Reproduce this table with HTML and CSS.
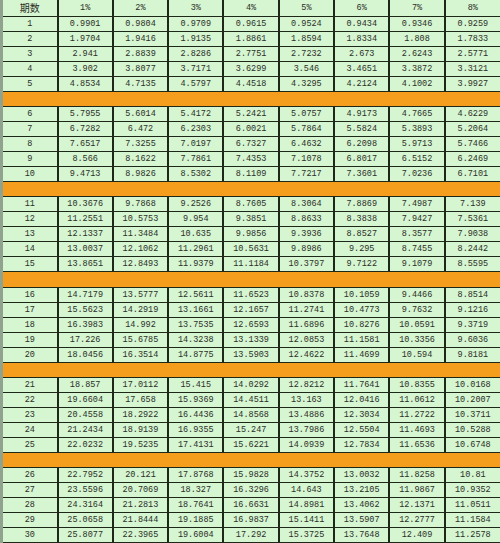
FILE: index.html
```html
<!DOCTYPE html>
<html lang="zh">
<head>
<meta charset="utf-8">
<title>年金现值系数表</title>
<link rel="stylesheet" href="styles.css">
</head>
<body>
<table class="pv">
<colgroup><col class="c-n"><col><col><col><col><col><col><col><col></colgroup>
<thead>
<tr class="hd"><th>期数</th><th>1%</th><th>2%</th><th>3%</th><th>4%</th><th>5%</th><th>6%</th><th>7%</th><th>8%</th></tr>
</thead>
<tbody>
<tr><td>1</td><td>0.9901</td><td>0.9804</td><td>0.9709</td><td>0.9615</td><td>0.9524</td><td>0.9434</td><td>0.9346</td><td>0.9259</td></tr>
<tr><td>2</td><td>1.9704</td><td>1.9416</td><td>1.9135</td><td>1.8861</td><td>1.8594</td><td>1.8334</td><td>1.808</td><td>1.7833</td></tr>
<tr><td>3</td><td>2.941</td><td>2.8839</td><td>2.8286</td><td>2.7751</td><td>2.7232</td><td>2.673</td><td>2.6243</td><td>2.5771</td></tr>
<tr><td>4</td><td>3.902</td><td>3.8077</td><td>3.7171</td><td>3.6299</td><td>3.546</td><td>3.4651</td><td>3.3872</td><td>3.3121</td></tr>
<tr><td>5</td><td>4.8534</td><td>4.7135</td><td>4.5797</td><td>4.4518</td><td>4.3295</td><td>4.2124</td><td>4.1002</td><td>3.9927</td></tr>
<tr class="sep"><td colspan="9"></td></tr>
<tr><td>6</td><td>5.7955</td><td>5.6014</td><td>5.4172</td><td>5.2421</td><td>5.0757</td><td>4.9173</td><td>4.7665</td><td>4.6229</td></tr>
<tr><td>7</td><td>6.7282</td><td>6.472</td><td>6.2303</td><td>6.0021</td><td>5.7864</td><td>5.5824</td><td>5.3893</td><td>5.2064</td></tr>
<tr><td>8</td><td>7.6517</td><td>7.3255</td><td>7.0197</td><td>6.7327</td><td>6.4632</td><td>6.2098</td><td>5.9713</td><td>5.7466</td></tr>
<tr><td>9</td><td>8.566</td><td>8.1622</td><td>7.7861</td><td>7.4353</td><td>7.1078</td><td>6.8017</td><td>6.5152</td><td>6.2469</td></tr>
<tr><td>10</td><td>9.4713</td><td>8.9826</td><td>8.5302</td><td>8.1109</td><td>7.7217</td><td>7.3601</td><td>7.0236</td><td>6.7101</td></tr>
<tr class="sep"><td colspan="9"></td></tr>
<tr><td>11</td><td>10.3676</td><td>9.7868</td><td>9.2526</td><td>8.7605</td><td>8.3064</td><td>7.8869</td><td>7.4987</td><td>7.139</td></tr>
<tr><td>12</td><td>11.2551</td><td>10.5753</td><td>9.954</td><td>9.3851</td><td>8.8633</td><td>8.3838</td><td>7.9427</td><td>7.5361</td></tr>
<tr><td>13</td><td>12.1337</td><td>11.3484</td><td>10.635</td><td>9.9856</td><td>9.3936</td><td>8.8527</td><td>8.3577</td><td>7.9038</td></tr>
<tr><td>14</td><td>13.0037</td><td>12.1062</td><td>11.2961</td><td>10.5631</td><td>9.8986</td><td>9.295</td><td>8.7455</td><td>8.2442</td></tr>
<tr><td>15</td><td>13.8651</td><td>12.8493</td><td>11.9379</td><td>11.1184</td><td>10.3797</td><td>9.7122</td><td>9.1079</td><td>8.5595</td></tr>
<tr class="sep"><td colspan="9"></td></tr>
<tr><td>16</td><td>14.7179</td><td>13.5777</td><td>12.5611</td><td>11.6523</td><td>10.8378</td><td>10.1059</td><td>9.4466</td><td>8.8514</td></tr>
<tr><td>17</td><td>15.5623</td><td>14.2919</td><td>13.1661</td><td>12.1657</td><td>11.2741</td><td>10.4773</td><td>9.7632</td><td>9.1216</td></tr>
<tr><td>18</td><td>16.3983</td><td>14.992</td><td>13.7535</td><td>12.6593</td><td>11.6896</td><td>10.8276</td><td>10.0591</td><td>9.3719</td></tr>
<tr><td>19</td><td>17.226</td><td>15.6785</td><td>14.3238</td><td>13.1339</td><td>12.0853</td><td>11.1581</td><td>10.3356</td><td>9.6036</td></tr>
<tr><td>20</td><td>18.0456</td><td>16.3514</td><td>14.8775</td><td>13.5903</td><td>12.4622</td><td>11.4699</td><td>10.594</td><td>9.8181</td></tr>
<tr class="sep"><td colspan="9"></td></tr>
<tr><td>21</td><td>18.857</td><td>17.0112</td><td>15.415</td><td>14.0292</td><td>12.8212</td><td>11.7641</td><td>10.8355</td><td>10.0168</td></tr>
<tr><td>22</td><td>19.6604</td><td>17.658</td><td>15.9369</td><td>14.4511</td><td>13.163</td><td>12.0416</td><td>11.0612</td><td>10.2007</td></tr>
<tr><td>23</td><td>20.4558</td><td>18.2922</td><td>16.4436</td><td>14.8568</td><td>13.4886</td><td>12.3034</td><td>11.2722</td><td>10.3711</td></tr>
<tr><td>24</td><td>21.2434</td><td>18.9139</td><td>16.9355</td><td>15.247</td><td>13.7986</td><td>12.5504</td><td>11.4693</td><td>10.5288</td></tr>
<tr><td>25</td><td>22.0232</td><td>19.5235</td><td>17.4131</td><td>15.6221</td><td>14.0939</td><td>12.7834</td><td>11.6536</td><td>10.6748</td></tr>
<tr class="sep"><td colspan="9"></td></tr>
<tr><td>26</td><td>22.7952</td><td>20.121</td><td>17.8768</td><td>15.9828</td><td>14.3752</td><td>13.0032</td><td>11.8258</td><td>10.81</td></tr>
<tr><td>27</td><td>23.5596</td><td>20.7069</td><td>18.327</td><td>16.3296</td><td>14.643</td><td>13.2105</td><td>11.9867</td><td>10.9352</td></tr>
<tr><td>28</td><td>24.3164</td><td>21.2813</td><td>18.7641</td><td>16.6631</td><td>14.8981</td><td>13.4062</td><td>12.1371</td><td>11.0511</td></tr>
<tr><td>29</td><td>25.0658</td><td>21.8444</td><td>19.1885</td><td>16.9837</td><td>15.1411</td><td>13.5907</td><td>12.2777</td><td>11.1584</td></tr>
<tr><td>30</td><td>25.8077</td><td>22.3965</td><td>19.6004</td><td>17.292</td><td>15.3725</td><td>13.7648</td><td>12.409</td><td>11.2578</td></tr>
</tbody>
</table>
</body>
</html>
```
FILE: styles.css
```css
html, body {
  margin: 0;
  padding: 0;
  background: #d4f2cf;
}
.pv {
  width: 500px;
  table-layout: fixed;
  border-collapse: collapse;
  font-family: "Liberation Mono", "Noto Sans CJK SC", monospace;
  font-size: 8.5px;
  color: #2b2f28;
  border-left: 3px solid #8fa38d;
}
.pv .c-n {
  width: 56px;
}
.pv th,
.pv td {
  background: #d6f5d1;
  border: 2px solid #1d2819;
  border-top-width: 1px;
  border-bottom-width: 1px;
  text-align: center;
  vertical-align: middle;
  padding: 0;
  height: 14px;
  line-height: 12px;
  font-weight: normal;
  white-space: nowrap;
  overflow: hidden;
}
.pv th {
  height: 15.5px;
  border-top: 0;
  font-family: "Liberation Mono", "Noto Sans CJK SC", monospace;
  font-size: 8.5px;
}
.pv th:first-child {
  font-family: "Noto Sans CJK SC", sans-serif;
  font-size: 10px;
}
.pv tr > :first-child {
  border-left: 0;
}
.pv tr > :last-child {
  border-right: 0;
}
.pv .sep td {
  background: #f59d1c;
  height: 14.4px;
  border-left: 0;
  border-right: 0;
}
```
